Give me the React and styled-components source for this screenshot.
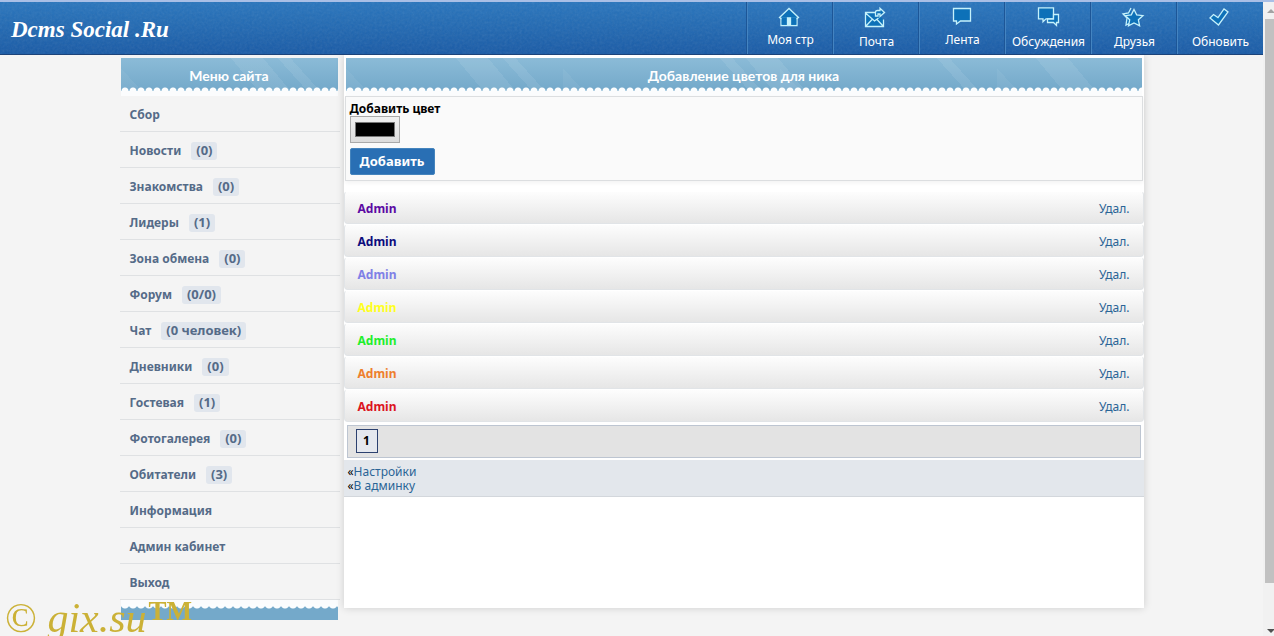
import React from "react";
import styled, { createGlobalStyle } from "styled-components";

const UI_FONT = '"Noto Sans", "Open Sans", sans-serif';

const GlobalStyle = createGlobalStyle`
  *, *::before, *::after { box-sizing: border-box; }
  html, body { margin: 0; height: 100%; overflow: hidden; }
  body {
    background: #f4f4f4;
    font-family: ${UI_FONT};
    font-size: 12px;
    line-height: 14px;
    color: #000;
  }
  #root { height: 100%; }
  a { text-decoration: none; color: #2a6496; }
`;

const Shell = styled.div`
  display: flex;
  height: 100vh;
  overflow: hidden;
  border-top: 2px solid #a9bfe6;
`;

const Page = styled.div`
  flex: 1;
  min-width: 0;
`;

const Header = styled.header`
  position: relative;
  display: flex;
  justify-content: space-between;
  height: 53px;
  background: linear-gradient(#2875bd, #185aa6);
  border-bottom: 1px solid #1c4379;
`;

const Grain = styled.svg`
  position: absolute;
  inset: 0;
  width: 100%;
  height: 100%;
  opacity: 0.12;
`;

const Logo = styled.a`
  position: relative;
  padding: 14px 11px;
  color: #fff;
  font: italic bold 23px/28px "Liberation Serif", serif;
`;

const Nav = styled.nav`
  position: relative;
  display: flex;
`;

const NavLink = styled.a`
  display: flex;
  flex-direction: column;
  align-items: center;
  gap: 5px;
  width: 86px;
  padding-top: 5px;
  border-left: 1px solid #4484c1;
  box-shadow: -1px 0 #1d5697;
  color: #fff;
  font-size: 12px;
  line-height: 16px;
  white-space: nowrap;
`;

const NavIcon = styled.svg`
  width: 22px;
  height: ${(p) => p.$height}px;
  margin-right: 4px;
  overflow: visible;
  fill: #0d71b8;
  stroke: #c5f1fb;
  stroke-width: 1.3;
`;

const Columns = styled.div`
  display: grid;
  grid-template-columns: 220px minmax(0, 1fr);
  gap: 4px;
  align-items: start;
  max-width: 1024px;
  margin: 0 auto;
`;

const Sidebar = styled.aside`
  padding-top: 3px;
`;

const scallops = "radial-gradient(circle at 4px 4px, #fbfdfe 3px, rgba(251, 253, 254, 0) 4px)";
const stripes = `
  linear-gradient(50deg, transparent 0 44%, rgba(255,255,255,.08) 44% 54%, transparent 54% 100%) 0 0 / 290px 100%,
  linear-gradient(48deg, rgba(255,255,255,.05) 0 10%, transparent 10% 76%, rgba(255,255,255,.08) 76% 81%, transparent 81%) 0 0 / 217px 100%`;

const Title = styled.h2`
  margin: 0 2px 0 ${(p) => (p.$wide ? 2 : 1)}px;
  height: 38px;
  padding-top: 9px;
  background:
    ${scallops} 0 29px / 8px 4px repeat-x,
    linear-gradient(#fbfcfd, #fbfcfd) 0 33px / 100% 5px no-repeat,
    ${stripes},
    linear-gradient(#8bbbd7, #74a9ca 32px);
  color: #fff;
  font: bold 14px/18px "Lato", "Noto Sans", sans-serif;
  text-align: center;
`;

const MenuList = styled.ul`
  margin: 0;
  padding: 0;
  list-style: none;
`;

const MenuLink = styled.a`
  display: flex;
  align-items: center;
  gap: 10px;
  height: 36px;
  padding: 2px 10px 0;
  border-bottom: 1px solid #dfe1e3;
  color: #556b88;
  font-weight: bold;
`;

const Count = styled.span`
  padding: 1px 5px 3px;
  border-radius: 3px;
  background: #e1e6ed;
  font-size: 13px;
`;

const MenuFoot = styled.div`
  height: 20px;
  margin: 0 2px 0 1px;
  background:
    radial-gradient(circle at 4px 0, #fbfdfe 4px, rgba(251, 253, 254, 0) 5px) 0 4px / 8px 5px repeat-x,
    linear-gradient(#fbfcfd, #fbfcfd) 0 0 / 100% 4px no-repeat,
    linear-gradient(#74a9ca, #74a9ca);
`;

const Main = styled.main`
  min-height: 553px;
  padding-top: 3px;
  background: #fff;
  box-shadow: 0 0 8px rgba(0, 0, 0, 0.16);
`;

const ColorForm = styled.form`
  display: flex;
  flex-direction: column;
  align-items: flex-start;
  margin: 0 1px 10px;
  height: 85px;
  padding: 5px 4px;
  background: #fafafa;
  border: 1px solid #dcdee0;
  box-shadow: 0 2px 4px rgba(0, 0, 0, 0.05);
`;

const FieldLabel = styled.label`
  font-weight: bold;
  line-height: 14px;
`;

const ColorField = styled.input`
  width: 50px;
  height: 27px;
  margin: 0 0 5px;
  padding: 2px;
  appearance: none;
  border: 1px solid #a9a9a9;
  background: linear-gradient(#f0f0f0, #dcdcdc);
  &::-webkit-color-swatch-wrapper { padding: 3px 2px; }
  &::-webkit-color-swatch { border: 1px solid #777; }
`;

const AddButton = styled.button`
  width: 85px;
  height: 27px;
  padding: 0 0 2px;
  border: 1px solid #4584bd;
  border-radius: 2px;
  background: #296fb4;
  color: #fff;
  font: bold 13px/18px ${UI_FONT};
`;

const ColorRow = styled.div`
  display: flex;
  align-items: center;
  justify-content: space-between;
  height: 33px;
  padding: 2px 13px 0;
  border: 1px solid #e1e4e7;
  border-top-color: #fff;
  border-radius: 4px;
  background: linear-gradient(#fdfdfd, #e6e6e6);
`;

const Nick = styled.strong`
  color: ${(p) => p.$color};
`;

const Pager = styled.nav`
  display: flex;
  align-items: center;
  height: 33px;
  margin: 3px 3px 2px;
  padding: 0 8px 2px;
  border: 1px solid #bdc5d1;
  background: #e3e3e3;
`;

const PageNumber = styled.a`
  width: 22px;
  border: 1px solid #2c416f;
  background: #e5e8ee;
  color: #000;
  font-weight: bold;
  line-height: 22px;
  text-align: center;
`;

const BackLinks = styled.div`
  height: 37px;
  padding: 5px 4px;
  background: #e3e7ec;
  border-bottom: 1px solid #d3d7dc;
`;

const ScrollTrack = styled.div`
  display: flex;
  flex-direction: column;
  width: 11px;
  padding-left: 2px;
  background: #f1f1f1;
`;

const ScrollArrow = styled.svg`
  width: 9px;
  height: 17px;
  fill: ${(p) => p.$fill};
`;

const ScrollRail = styled.div`
  flex: 1;
`;

const ScrollThumb = styled.div`
  height: 94%;
  background: #c1c1c1;
`;

const Watermark = styled.div`
  position: fixed;
  left: 5px;
  bottom: -6px;
  display: flex;
  align-items: flex-start;
  color: #cbb136;
  font: italic 42px/48px "Liberation Serif", serif;
  white-space: pre;
`;

const Upright = styled.span`
  font-style: normal;
`;

const Trademark = styled.span`
  padding-left: 2px;
  font: bold 27px/34px "Liberation Serif", serif;
`;

const icons = {
  home: (
    <>
      <path d="M3 9v9.500h16V9" />
      <path d="M1.500 10.500 11 1.500l9.500 9-1.500 1H3z" />
      <path d="M3.700 10.500h14.600v7.300H3.700z" stroke="none" />
      <path d="M9.500 11h3v7h-3z" fill="#c5f1fb" />
    </>
  ),
  mail: (
    <>
      <path d="M12 5.500H1.500v14h18v-7M1.500 6l9 8 4-3M2 19l6.500-7M19 19l-6-6.500" />
      <path d="M11.500 9V5c0-1 1-1.500 2-1.500H16V1.300L20.500 5.500 16 9.500V7h-2v2z" />
    </>
  ),
  chat: <path d="M3.500 1.500h17v12.500H10.500L6.500 17v-3h-3z" />,
  talks: (
    <>
      <path d="M2.500.800h15v11H10l-3 3v-3H2.500z" />
      <path d="M17.500 7.500h5v8h-2v3l-3-3h-6v-3.500h6z" />
    </>
  ),
  star: (
    <>
      <path d="M9 1 6.500 6 1 7l4 4-1 7 4-2" />
      <path d="m12 2.500 2.700 5.300 6.300.8-4.600 4.200 1.200 6L12 16l-5.500 2.800 1.200-6L3.200 8.600l6.100-.8z" />
    </>
  ),
  check: <path d="m2 11 3.500-3.500L10 10.500 16 2l4 3-9.500 13z" />,
};

const navItems = [
  ["Моя стр", "home", 20],
  ["Почта", "mail", 22],
  ["Лента", "chat", 20],
  ["Обсуждения", "talks", 22],
  ["Друзья", "star", 22],
  ["Обновить", "check", 22],
];

const menuItems = [
  ["Сбор"],
  ["Новости", "(0)"],
  ["Знакомства", "(0)"],
  ["Лидеры", "(1)"],
  ["Зона обмена", "(0)"],
  ["Форум", "(0/0)"],
  ["Чат", "(0 человек)"],
  ["Дневники", "(0)"],
  ["Гостевая", "(1)"],
  ["Фотогалерея", "(0)"],
  ["Обитатели", "(3)"],
  ["Информация"],
  ["Админ кабинет"],
  ["Выход"],
];

const nickColors = ["#5c0aa3", "#0c0c7d", "#7f80e6", "#ffff1f", "#1fee2c", "#ee7f2d", "#dc1420"];

export default function App() {
  return (
    <>
      <GlobalStyle />
      <Shell>
        <Page>
          <Header>
            <Grain aria-hidden="true">
              <filter id="grain">
                <feTurbulence type="fractalNoise" baseFrequency="0.4" numOctaves="2" />
                <feColorMatrix type="saturate" values="0" />
              </filter>
              <rect width="100%" height="100%" filter="url(#grain)" />
            </Grain>
            <Logo href="#home">Dcms Social .Ru</Logo>
            <Nav>
              {navItems.map(([label, icon, height]) => (
                <NavLink href={`#${icon}`} key={icon}>
                  <NavIcon viewBox={`0 0 22 ${height}`} $height={height} aria-hidden="true">
                    {icons[icon]}
                  </NavIcon>
                  {label}
                </NavLink>
              ))}
            </Nav>
          </Header>
          <Columns>
            <Sidebar>
              <Title>Меню сайта</Title>
              <MenuList>
                {menuItems.map(([label, count]) => (
                  <li key={label}>
                    <MenuLink href="#menu">
                      {label}
                      {count && <Count>{count}</Count>}
                    </MenuLink>
                  </li>
                ))}
              </MenuList>
              <MenuFoot />
            </Sidebar>
            <Main>
              <Title $wide>Добавление цветов для ника</Title>
              <ColorForm onSubmit={(e) => e.preventDefault()}>
                <FieldLabel htmlFor="color">Добавить цвет</FieldLabel>
                <ColorField id="color" type="color" defaultValue="#000000" />
                <AddButton>Добавить</AddButton>
              </ColorForm>
              {nickColors.map((color) => (
                <ColorRow key={color}>
                  <Nick $color={color}>Admin</Nick>
                  <a href="#delete">Удал.</a>
                </ColorRow>
              ))}
              <Pager>
                <PageNumber href="#1">1</PageNumber>
              </Pager>
              <BackLinks>
                <div>«<a href="#settings">Настройки</a></div>
                <div>«<a href="#admin">В админку</a></div>
              </BackLinks>
            </Main>
          </Columns>
        </Page>
        <ScrollTrack aria-hidden="true">
          <ScrollArrow viewBox="0 0 9 17" $fill="#a3a3a3"><path d="m2 11 4-4 4 4z" /></ScrollArrow>
          <ScrollRail>
            <ScrollThumb />
          </ScrollRail>
          <ScrollArrow viewBox="0 0 9 17" $fill="#505050"><path d="m2 10 4 4 4-4z" /></ScrollArrow>
        </ScrollTrack>
      </Shell>
      <Watermark>
        <Upright>© </Upright>gix.su<Trademark>TM</Trademark>
      </Watermark>
    </>
  );
}
